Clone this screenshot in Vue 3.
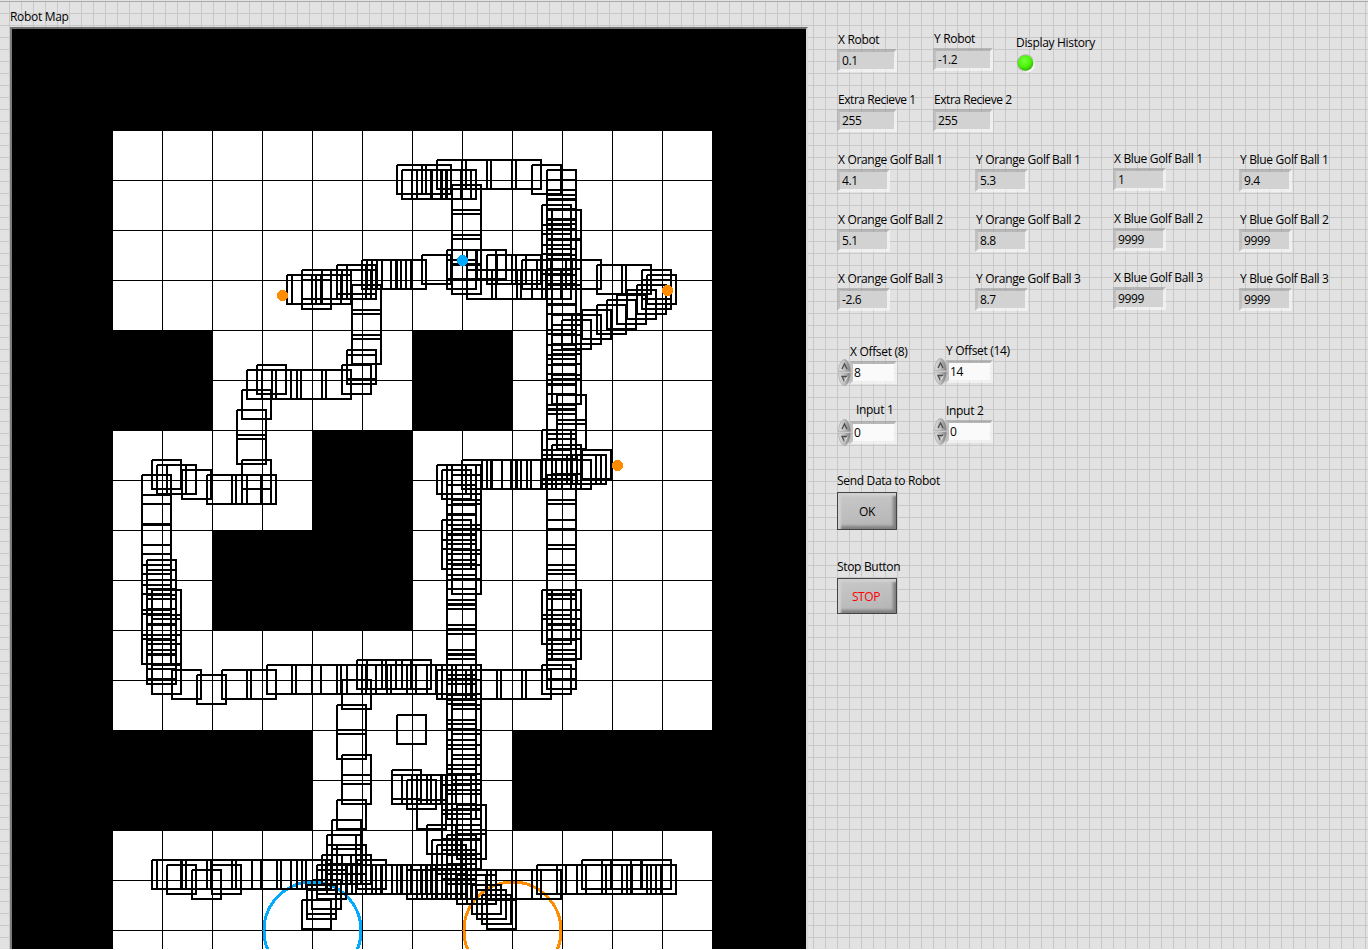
<script setup>
// Robot footprints, grouped as [lefts, tops]; every combination is one 29px outline.
const runs = [
  [[397, 422], [165]], [[402, 412, 417, 432, 442, 447], [170]],
  [[437, 462, 487, 512], [160]], [[532], [165]],
  [[452], [185, 210, 235, 265]],
  [[542], [205, 225, 245]],
  [[552], [210, 240, 260, 285, 315, 325, 335, 350]],
  [[547], [170, 180, 190, 195, 200, 210, 220, 230, 240, 255, 275, 285, 305, 330, 345, 355, 365, 380, 385, 405, 410, 430]],
  [[447, 467, 477], [250]], [[447], [260]], [[422], [255]],
  [[467, 492, 517, 532, 542], [270]],
  [[487, 497, 512], [255]], [[522, 537, 547, 572], [260]],
  [[597, 622], [265]], [[642], [270, 280]], [[647], [275]], [[637], [285]],
  [[627], [290]], [[617], [295]], [[607], [300]], [[597], [305]], [[582], [310]], [[572], [315]], [[562], [320]],
  [[287, 292, 312, 322], [275]], [[302, 322, 337, 342, 347], [270]], [[302], [280]],
  [[337, 347], [265]], [[362, 367, 372, 377, 382, 397], [260]],
  [[352], [285, 310, 335]], [[347], [350, 355]], [[342], [365]],
  [[247, 262, 272, 297, 322], [370]], [[257], [365]], [[242], [390]],
  [[237], [410, 435]], [[242], [460]], [[207, 232, 242, 247], [475]],
  [[182], [470]], [[152], [460]], [[157, 167], [465]],
  [[142], [475, 495, 525, 545, 565, 585, 610, 635]],
  [[147], [560, 570, 580, 595, 615, 625, 640, 650, 655]],
  [[152], [590, 615, 635, 665]],
  [[172], [670]], [[197], [675]], [[222, 247], [670]],
  [[267, 292, 312, 337, 347, 362, 387, 407, 427, 442, 452], [665]],
  [[357, 367, 382, 402], [660]],
  [[437, 442, 472, 497, 522], [670]],
  [[342], [680]], [[337], [705, 730]], [[397], [715]], [[542], [665]],
  [[437], [465]], [[442], [470]],
  [[462, 482, 487, 492, 502, 512, 517, 527, 542, 552, 562], [460]],
  [[552], [375, 445]], [[542], [430, 450, 455]], [[582], [450]], [[567, 572, 577], [455]],
  [[557], [395, 420]],
  [[547], [475, 500, 520, 545, 565, 570, 595, 610, 625, 630, 640, 650, 660]],
  [[542], [590, 615]], [[552], [590, 610, 630]],
  [[442], [520, 540]],
  [[452], [465, 475, 500, 525, 550, 565]],
  [[447], [465, 485, 505, 515, 525, 535, 540, 560, 575, 580, 600, 605, 625, 630, 650, 655, 670, 675, 695, 700, 720, 740, 745, 765, 775, 790]],
  [[452], [665, 680, 705, 730, 745, 755, 765, 780, 790, 810, 825, 840]],
  [[457], [805, 830]],
  [[442], [775, 785, 810, 825, 840, 850]],
  [[392, 402, 412, 417, 427], [775]], [[392], [770]], [[407], [780]], [[417], [800]],
  [[427], [825]], [[432], [840]], [[437], [845]], [[447], [835, 850, 855]],
  [[342], [755, 775]], [[337], [800]], [[332], [820]], [[327, 332], [835]], [[327, 337], [845]],
  [[322, 332, 342], [855]], [[357], [860]],
  [[317, 327, 337, 347, 352, 372, 382, 392, 397, 402, 407, 427, 437], [865]],
  [[407, 417, 422, 427, 432, 437, 442, 447, 462, 467, 487, 512, 532], [870]],
  [[537, 557, 577, 602, 622, 627, 632, 647], [865]], [[582, 602, 612, 642], [860]],
  [[457, 467], [875]], [[472], [885]], [[477], [890]], [[482], [895]], [[487], [900]],
  [[152, 157, 182, 207, 232, 252, 262, 277, 297, 302], [860]],
  [[167, 212], [865]], [[192], [870]],
  [[302], [900]], [[307], [885, 890]], [[312], [880]], [[317], [870]],
]
const track = runs
  .flatMap(([xs, ys]) => xs.flatMap((x) => ys.map((y) => `M${x} ${y}h29v29h-29v-29`)))
  .join('')

const gridLines =
  Array.from({ length: 11 }, (_, i) => `M${162.5 + i * 50} 131V949`).join('') +
  Array.from({ length: 16 }, (_, i) => `M113 ${180.5 + i * 50}H712`).join('')

const robotRow = [
  { label: 'X Robot', value: '0.1' },
  { label: 'Y Robot', value: '-1.2', up: true },
]
const extraRow = [
  { label: 'Extra Recieve 1', value: '255' },
  { label: 'Extra Recieve 2', value: '255' },
]
const golfRows = [
  ['4.1', '5.3', '1', '9.4'],
  ['5.1', '8.8', '9999', '9999'],
  ['-2.6', '8.7', '9999', '9999'],
].map((values, r) =>
  ['X Orange', 'Y Orange', 'X Blue', 'Y Blue'].map((name, c) => ({
    label: `${name} Golf Ball ${r + 1}`,
    value: values[c],
    up: c === 2,
  })),
)
const inputs = [
  { label: 'X Offset (8)', value: '8', cls: 'xo' },
  { label: 'Y Offset (14)', value: '14', cls: 'yo' },
  { label: 'Input 1', value: '0', cls: 'i1' },
  { label: 'Input 2', value: '0', cls: 'i2' },
]
</script>

<template>
  <main class="front">
    <section class="map">
      <h1 class="label">Robot Map</h1>
      <div class="frame">
        <svg width="794" height="920" viewBox="12 29 794 920" shape-rendering="crispEdges">
          <rect x="12" y="29" width="794" height="920" fill="#000" />
          <rect x="113" y="131" width="599" height="818" fill="#fff" />
          <path :d="gridLines" stroke="#000" stroke-width="1" />
          <path d="M112 330h101v101h-101zM412 330h101v101h-101zM312 430h101v201h-201v-101h100zM112 730h201v101h-201zM512 730h201v101h-201z" />
          <circle cx="312.5" cy="930.5" r="48.5" fill="none" stroke="#00aaff" stroke-width="3" />
          <circle cx="512.5" cy="930.5" r="48.5" fill="none" stroke="#ff8c00" stroke-width="3" />
          <path :d="track" fill="none" stroke="#000" stroke-width="2" />
          <circle cx="462.5" cy="260.5" r="5.5" fill="#00aaff" />
          <g fill="#ff8c00">
            <circle cx="282.5" cy="295.5" r="5.5" />
            <circle cx="667.5" cy="290.5" r="5.5" />
            <circle cx="617.5" cy="465.5" r="5.5" />
          </g>
        </svg>
      </div>
    </section>

    <section class="controls">
      <div class="row pair">
        <div v-for="f in robotRow" :key="f.label" class="item" :class="{ up: f.up }">
          <span class="label">{{ f.label }}</span>
          <output class="field wide">{{ f.value }}</output>
        </div>
        <div class="item history">
          <span class="label">Display History</span>
          <svg class="led" width="20" height="20" viewBox="0 0 20 20">
            <defs>
              <linearGradient id="ring" x1="0" y1="0" x2="1" y2="1">
                <stop offset=".2" stop-color="#a4a4a4" /><stop offset=".85" stop-color="#fff" />
              </linearGradient>
              <radialGradient id="bulb" cx=".42" cy=".35" r=".65">
                <stop offset="0" stop-color="#73ff3c" /><stop offset=".6" stop-color="#4bf50a" /><stop offset="1" stop-color="#36b50c" />
              </radialGradient>
            </defs>
            <circle cx="10" cy="9.500" r="9.200" fill="url(#ring)" />
            <circle cx="9.500" cy="9" r="7.800" fill="url(#bulb)" />
          </svg>
        </div>
      </div>
      <div class="row pair extra">
        <div v-for="f in extraRow" :key="f.label" class="item">
          <span class="label">{{ f.label }}</span>
          <output class="field wide">{{ f.value }}</output>
        </div>
      </div>
      <div v-for="(row, i) in golfRows" :key="i" class="row golf" :class="'g' + i">
        <div v-for="f in row" :key="f.label" class="item" :class="{ up: f.up }">
          <span class="label">{{ f.label }}</span>
          <output class="field">{{ f.value }}</output>
        </div>
      </div>
      <div class="inputs">
        <div v-for="f in inputs" :key="f.label" class="item" :class="f.cls">
          <span class="label">{{ f.label }}</span>
          <div class="entry">
            <svg class="spin" width="13" height="27" viewBox="0 0 13 27">
              <defs>
                <linearGradient id="knob" x1="0" x2="1">
                  <stop offset="0" stop-color="#dedede" /><stop offset=".5" stop-color="#bdbdbd" /><stop offset="1" stop-color="#7d7d7d" />
                </linearGradient>
              </defs>
              <path d="M.5 12.500C.8 5 3.500 .5 6.500 .5s5.700 4.500 6 12z" fill="url(#knob)" stroke="#a0a0a0" stroke-width=".6" />
              <path d="M.5 14C.8 21.500 3.500 26.500 6.500 26.500s5.700-5 6-12.500z" fill="url(#knob)" stroke="#a0a0a0" stroke-width=".6" />
              <path d="M4 10 6.500 5 9 10" fill="none" stroke="#4d4d4d" stroke-width="1.300" />
              <path d="M9.500 17.500H4l2.500 5" fill="none" stroke="#4d4d4d" stroke-width="1.300" />
              <path d="M9.500 17.500 6.500 22.500" stroke="#eee" />
            </svg>
            <output class="field edit">{{ f.value }}</output>
          </div>
        </div>
      </div>
      <div class="action">
        <span class="label">Send Data to Robot</span>
        <button class="btn">OK</button>
      </div>
      <div class="action stop">
        <span class="label">Stop Button</span>
        <button class="btn">STOP</button>
      </div>
    </section>
  </main>
</template>

<style>
body {
  background: #fff;
}
</style>

<style scoped>
.front {
  display: flex;
  box-sizing: border-box;
  width: 1368px;
  height: 949px;
  overflow: hidden;
  border-top: 1px solid #e2e2e2;
  background-color: #e2e2e2;
  background-image:
    linear-gradient(#a8a8a8, #a8a8a8),
    linear-gradient(to right, #c8c8c8 1px, transparent 1px),
    linear-gradient(#c8c8c8 1px, transparent 1px);
  background-size: 100% 1px, 12px 12px, 12px 12px;
  background-position: 0 0, 9px 0, 0 0;
  background-repeat: no-repeat, repeat, repeat;
  font-family: 'Open Sans', 'Noto Sans', sans-serif;
  font-size: 12px;
  color: #000;
}
.label {
  display: block;
  height: 16px;
  margin: 0;
  font-size: 12px;
  font-weight: 400;
  line-height: 16px;
  letter-spacing: -0.32px;
  white-space: nowrap;
}
.map {
  flex: none;
  width: 799px;
  padding: 8px 0 0 10px;
}
.frame {
  width: 794px;
  height: 930px;
  margin-top: 2px;
  border: 2px solid #6c6f6c;
  border-right-color: #d8d8d8;
  border-left-color: #7c7c7c;
}
.frame svg {
  display: block;
}
.controls {
  padding: 31px 0 0 28px;
}
.row {
  display: grid;
  height: 60px;
}
.pair {
  grid-template-columns: 96px 82px 120px;
}
.extra .label {
  letter-spacing: -0.45px;
}
.golf {
  grid-template-columns: 138px 138px 126px 120px;
}
.g1 {
  height: 59px;
}
.g2 {
  height: 73px;
}
.item .label {
  padding-left: 1px;
}
.up {
  margin-top: -1px;
}
.field {
  display: block;
  box-sizing: border-box;
  width: 53px;
  height: 23px;
  margin-top: 1px;
  padding-left: 2px;
  border: 3px solid;
  border-color: rgba(150, 150, 150, 0.55) rgba(248, 248, 248, 0.65) rgba(248, 248, 248, 0.65) rgba(160, 160, 160, 0.5);
  background: #d2d2d2;
  background-clip: padding-box;
  line-height: 18px;
  letter-spacing: -0.4px;
}
.wide {
  width: 60px;
}
.history {
  padding-top: 3px;
}
.led {
  display: block;
  margin-top: 3px;
  margin-left: 1px;
}
.inputs {
  display: grid;
  grid-template-columns: 96px 96px;
  grid-template-rows: 58px 71px;
}
.entry {
  display: flex;
  align-items: flex-start;
}
.spin {
  flex: none;
  margin-top: -1px;
  margin-left: 1px;
}
.edit {
  width: 47px;
  margin-left: -1px;
  padding-left: 1px;
  background-color: #fafafa;
}
.xo .label {
  padding-left: 13px;
}
.yo {
  margin-top: -1px;
}
.yo .label {
  padding-left: 13px;
}
.i1 .label {
  padding-left: 19px;
}
.i1 .entry {
  margin-top: 2px;
}
.i2 {
  margin-top: 1px;
}
.i2 .label {
  padding-left: 13px;
}
.action {
  height: 86px;
}
.btn {
  display: block;
  box-sizing: border-box;
  width: 60px;
  height: 38px;
  margin-top: 3px;
  padding: 0;
  border: 1px solid #444;
  background: linear-gradient(170deg, #c9c9c9, #b4b4b4);
  box-shadow: inset 3px 3px 2px #d0d0d0, inset -3px -3px 3px #808080;
  font: inherit;
  letter-spacing: -0.4px;
}
.stop .btn {
  height: 36px;
  padding-right: 2px;
  color: #f00;
}
</style>
